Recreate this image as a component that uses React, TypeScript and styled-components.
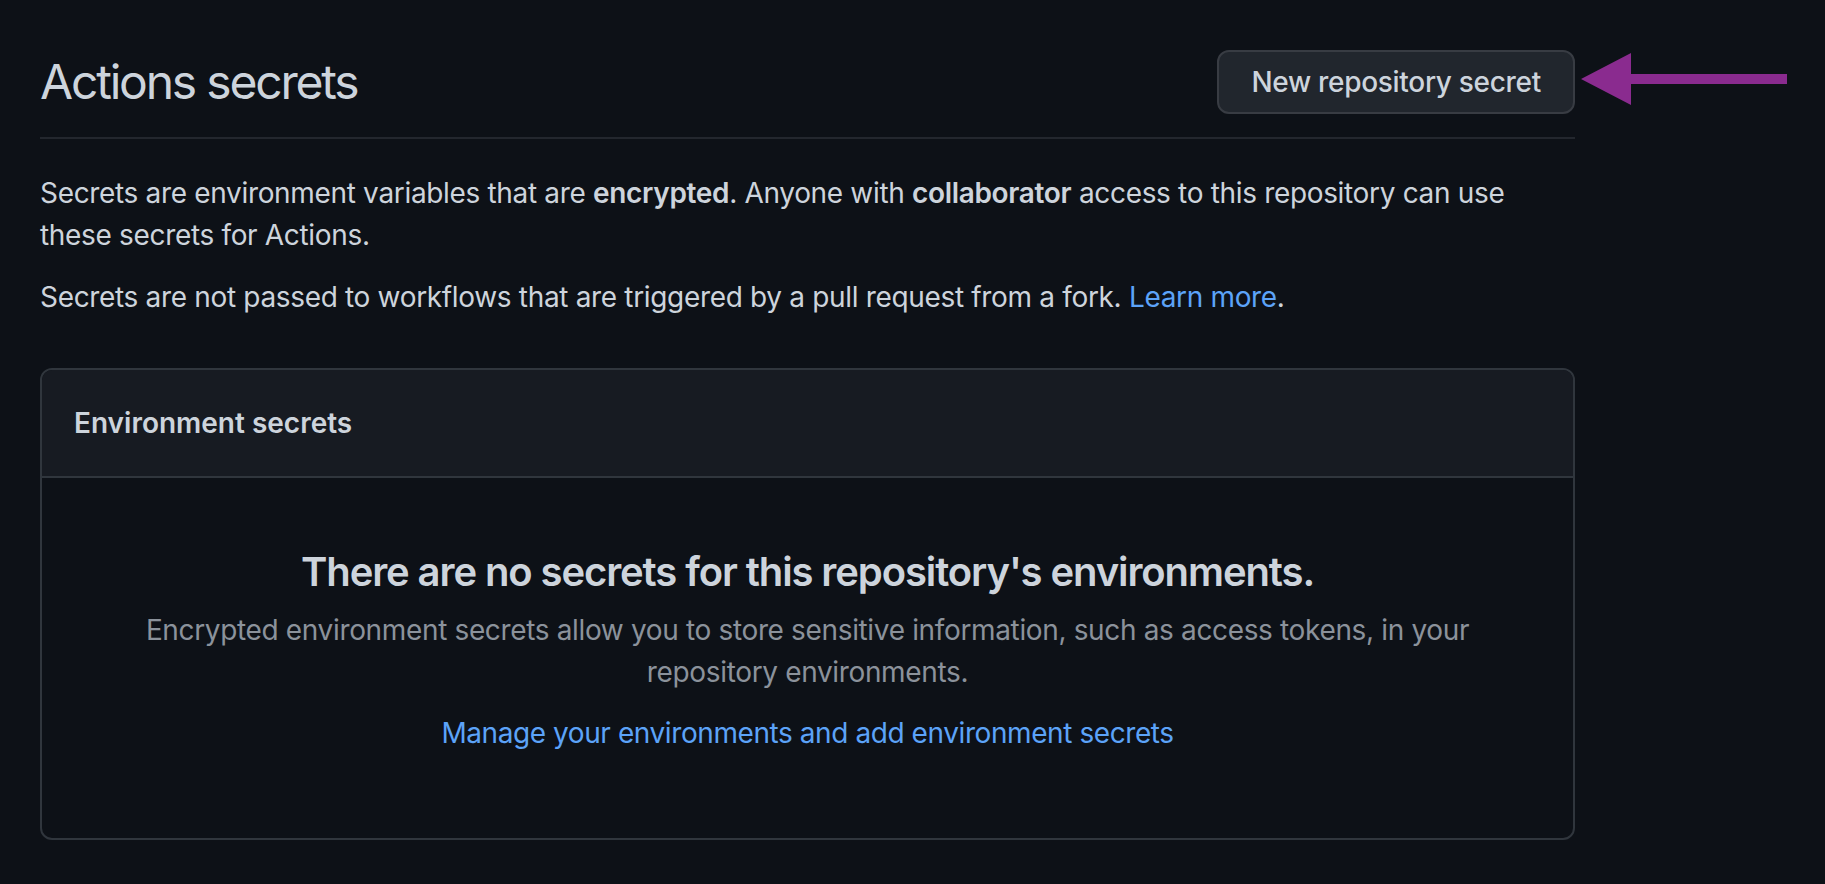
import React from "react";
import styled, { createGlobalStyle } from "styled-components";

const GlobalStyle = createGlobalStyle`
  html, body {
    margin: 0;
    padding: 0;
    background: #0d1117;
  }
  body {
    font-family: Inter, "Noto Sans", "Liberation Sans", sans-serif;
    color: #cdd4dc;
    -webkit-font-smoothing: antialiased;
  }
`;

const Page = styled.div`
  width: 1535px;
  padding: 50px 0 40px 40px;
`;

const Subhead = styled.div`
  position: relative;
  display: flex;
  align-items: center;
  justify-content: space-between;
  padding-bottom: 23px;
  border-bottom: 2px solid #23272e;
  margin-bottom: 33px;
`;

const Title = styled.h2`
  margin: 0;
  font-size: 48px;
  font-weight: 400;
  line-height: 60px;
  letter-spacing: -2.2px;
  color: #cdd4dc;
`;

const Button = styled.button`
  height: 64px;
  padding: 0 32px;
  font-family: inherit;
  font-size: 28px;
  font-weight: 500;
  letter-spacing: -0.3px;
  color: #cdd4dc;
  background: #21262d;
  border: 2px solid #383c43;
  border-radius: 12px;
  cursor: pointer;
`;

const Arrow = styled.svg`
  position: absolute;
  left: calc(100% + 4px);
  top: 0;
`;

const Paragraph = styled.p<{ $gap?: number }>`
  margin: 0 0 ${(p) => p.$gap ?? 20}px;
  font-size: 28px;
  line-height: 42px;
  letter-spacing: -0.33px;
  color: #cdd4dc;

  strong {
    font-weight: 600;
  }
`;

const Link = styled.a`
  color: #5ca3f8;
  text-decoration: none;
`;

const Box = styled.section`
  margin-top: 50px;
  border: 2px solid #30363d;
  border-radius: 12px;
  overflow: hidden;
`;

const BoxHeader = styled.div`
  padding: 32px;
  background: #171b22;
  border-bottom: 2px solid #30363d;
  font-size: 28px;
  line-height: 42px;
  font-weight: 600;
  color: #cdd4dc;
`;

const Blankslate = styled.div`
  padding: 64px 64px 84px;
  text-align: center;
`;

const BlankTitle = styled.h3`
  margin: 0 0 7px;
  font-size: 40px;
  line-height: 60px;
  font-weight: 600;
  letter-spacing: -1.1px;
  color: #cdd4dc;
`;

const BlankText = styled.p`
  margin: 0 auto 19px;
  max-width: 1400px;
  font-size: 28px;
  line-height: 42px;
  letter-spacing: -0.35px;
  color: #8b929b;
`;

const BlankLink = styled(Link)`
  display: inline-block;
  font-size: 28px;
  line-height: 42px;
  letter-spacing: -0.42px;
`;

export default function App() {
  return (
    <>
      <GlobalStyle />
      <Page>
        <Subhead>
          <Title>Actions secrets</Title>
          <Button>New repository secret</Button>
          <Arrow width="210" height="60" viewBox="0 0 210 60">
            <polygon points="2,29 52,3 52,24 208,24 208,34 52,34 52,55" fill="#8a2b8f" />
          </Arrow>
        </Subhead>
        <Paragraph>
          Secrets are environment variables that are <strong>encrypted</strong>. Anyone with{" "}
          <strong>collaborator</strong> access to this repository can use these secrets for Actions.
        </Paragraph>
        <Paragraph $gap={0}>
          Secrets are not passed to workflows that are triggered by a pull request from a fork.{" "}
          <Link href="#">Learn more</Link>.
        </Paragraph>
        <Box>
          <BoxHeader>Environment secrets</BoxHeader>
          <Blankslate>
            <BlankTitle>There are no secrets for this repository's environments.</BlankTitle>
            <BlankText>
              Encrypted environment secrets allow you to store sensitive information, such as access tokens, in your
              repository environments.
            </BlankText>
            <BlankLink href="#">Manage your environments and add environment secrets</BlankLink>
          </Blankslate>
        </Box>
      </Page>
    </>
  );
}
